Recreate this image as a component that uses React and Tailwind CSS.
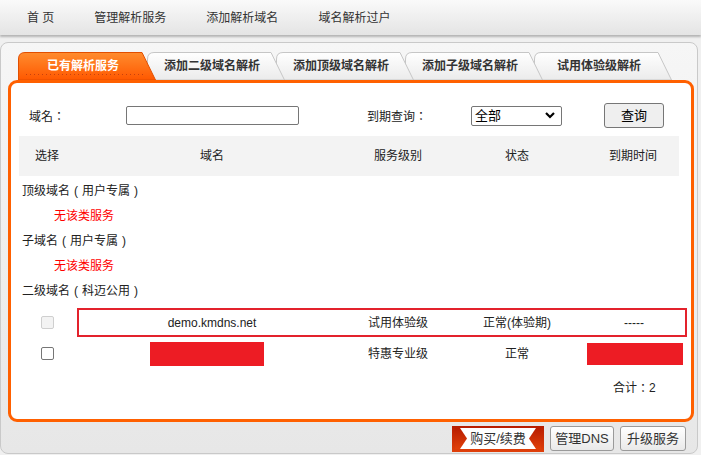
import React from "react";

const FONT = { fontFamily: '"Liberation Sans", "Noto Sans CJK SC", sans-serif' };
// centred full-width punctuation, as in the reference
const PUNCT = { fontFamily: '"Noto Sans CJK TC", "Noto Sans CJK SC", sans-serif' };

const tabs = [
  { label: "已有解析服务", active: true, z: "z-[5]" },
  { label: "添加二级域名解析", z: "z-[4]" },
  { label: "添加顶级域名解析", z: "z-[3]" },
  { label: "添加子级域名解析", z: "z-[2]" },
  { label: "试用体验级解析", z: "z-[1]" },
];

function Tab({ label, active, z, first }) {
  return (
    <div className={`relative h-[28px] w-[138px] shrink-0 ${z} ${first ? "" : "-ml-[9px]"}`}>
      <svg className="absolute inset-0" width="138" height="28" viewBox="0 0 138 28">
        <defs>
          <linearGradient id="tabOn" x1="0" y1="0" x2="0" y2="1">
            <stop offset="0" stopColor="#ff8c2e" />
            <stop offset="1" stopColor="#ff5800" />
          </linearGradient>
          <linearGradient id="tabOff" x1="0" y1="0" x2="0" y2="1">
            <stop offset="0" stopColor="#ffffff" />
            <stop offset="1" stopColor="#ebebeb" />
          </linearGradient>
        </defs>
        <path
          d="M0.5,28 L0.5,7 Q0.5,0.5 7,0.5 L124,0.5 L137.5,28 Z"
          fill={active ? "url(#tabOn)" : "url(#tabOff)"}
          stroke={active ? "#e24f00" : "#c6c6c6"}
        />
        {active && (
          <line x1="8" y1="22.5" x2="126" y2="22.5" stroke="#c8400c" strokeDasharray="1 3" />
        )}
      </svg>
      <div
        className={`relative flex h-full w-[130px] items-center justify-center text-[12px] font-bold ${
          active ? "text-white" : "text-[#333]"
        }`}
      >
        {label}
      </div>
    </div>
  );
}

function Box({ disabled }) {
  return (
    <span
      className={`block h-[13px] w-[13px] rounded-[2px] border ${
        disabled ? "border-[#cfcfcf] bg-[#f3f3f3]" : "border-[#767676] bg-white"
      }`}
    />
  );
}

// group title with centred brackets: 顶级域名（用户专属）
function GroupTitle({ name, note }) {
  return (
    <div className="flex h-[25px] items-center">
      {name}
      <span className="inline-block w-[12px] text-center">(</span>
      {note}
      <span className="inline-block w-[12px] text-center">)</span>
    </div>
  );
}

function BuyButton() {
  return (
    <div className="relative h-[26px] w-[92px]">
      <svg className="absolute inset-0" width="92" height="26" viewBox="0 0 92 26">
        <defs>
          <linearGradient id="buyRed" x1="0" y1="0" x2="0" y2="1">
            <stop offset="0" stopColor="#b81d00" />
            <stop offset="1" stopColor="#e0400a" />
          </linearGradient>
        </defs>
        <rect x="0" y="0" width="92" height="26" fill="url(#buyRed)" />
        <rect x="3" y="2" width="86" height="21" fill="#ffffff" />
        <polygon points="3,2 8,2 15,12.5 8,23 3,23" fill="url(#buyRed)" />
        <polygon points="89,2 84,2 77,12.5 84,23 89,23" fill="url(#buyRed)" />
      </svg>
      <div className="relative flex h-[25px] items-center justify-center text-[13px] text-[#333]">
        购买/续费
      </div>
    </div>
  );
}

function App() {
  return (
    <div className="h-[455px] w-[701px] overflow-hidden bg-[#f0f0f0] text-[12px] text-[#222]" style={FONT}>
      <nav className="flex h-[35px] items-center gap-[40px] bg-gradient-to-b from-[#fafafa] to-[#e4e4e4] pl-[27px] text-[12px] text-[#333] shadow-[0_2px_2px_rgba(0,0,0,0.25)]">
        <span>首 页</span>
        <span>管理解析服务</span>
        <span>添加解析域名</span>
        <span>域名解析过户</span>
      </nav>

      <section className="mt-[7px] mr-[3px] h-[412px] rounded-[8px] border border-[#c9c9c9] bg-gradient-to-b from-[#f6f6f6] to-[#e7e7e7]">
        <div className="flex pt-[9px] pl-[17px]">
          {tabs.map((t, i) => (
            <Tab key={t.label} {...t} first={i === 0} />
          ))}
        </div>

        <div className="ml-[7px] h-[342px] w-[686px] rounded-[9px] border-[3px] border-[#ff6000] bg-white">
          <div className="mt-[20px] flex h-[25px] items-center pl-[18px]">
            <span className="w-[97px]" style={PUNCT}>域名：</span>
            <span className="h-[19px] w-[173px] rounded-[2px] border border-[#767676] bg-white" />
            <span className="ml-[68px] w-[104px]" style={PUNCT}>到期查询：</span>
            <div className="flex h-[20px] w-[91px] items-center justify-between rounded-[2px] border border-[#767676] pr-[6px] pl-[3px] text-[13px] text-black">
              <span>全部</span>
              <svg width="10" height="7" viewBox="0 0 10 7">
                <polyline points="1,1 5,5 9,1" fill="none" stroke="#000" strokeWidth="2.2" />
              </svg>
            </div>
            <button
              type="button"
              className="ml-[42px] h-[25px] w-[60px] rounded-[3px] border border-[#767676] bg-[#efefef] text-[13px] text-black"
            >
              查询
            </button>
          </div>

          <div className="mt-[8px] ml-[8px] grid h-[40px] w-[660px] grid-cols-[56px_274px_98px_140px_92px] items-center bg-[#f3f3f3] text-center">
            <span>选择</span>
            <span>域名</span>
            <span>服务级别</span>
            <span>状态</span>
            <span>到期时间</span>
          </div>

          <div className="mt-[2px] pl-[11px]">
            <GroupTitle name="顶级域名" note="用户专属" />
            <div className="flex h-[25px] items-center pl-[32px] text-[#ff0000]">无该类服务</div>
            <GroupTitle name="子域名" note="用户专属" />
            <div className="flex h-[25px] items-center pl-[32px] text-[#ff0000]">无该类服务</div>
            <GroupTitle name="二级域名" note="科迈公用" />
          </div>

          <div className="mt-[5px] flex items-center">
            <div className="w-[66px] pl-[30px]">
              <Box disabled />
            </div>
            <div className="grid h-[29px] w-[610px] grid-cols-[266px_106px_132px_102px] items-center border-2 border-[#e3222c] text-center">
              <span>demo.kmdns.net</span>
              <span>试用体验级</span>
              <span>正常(体验期)</span>
              <span>-----</span>
            </div>
          </div>

          <div className="mt-[4px] flex h-[25px] items-center">
            <div className="w-[66px] pl-[30px]">
              <Box />
            </div>
            <div className="grid w-[610px] grid-cols-[266px_106px_132px_102px] items-center pl-[2px] text-center">
              <span className="ml-[71px] block h-[24px] w-[114px] bg-[#ed1c24]" />
              <span>特惠专业级</span>
              <span>正常</span>
              <span className="ml-[4px] block h-[22px] w-[96px] bg-[#ed1c24]" />
            </div>
          </div>

          <div className="mt-[12px] flex h-[20px] items-center pl-[602px]">
            合计<span style={PUNCT}>：</span>2
          </div>
        </div>

        <div className="mt-[4px] flex justify-end gap-[6px] pr-[11px]">
          <BuyButton />
          <button
            type="button"
            className="h-[25px] w-[64px] rounded-[3px] border border-[#9a9a9a] bg-gradient-to-b from-white to-[#e9e9e9] text-[13px] text-[#333]"
          >
            管理DNS
          </button>
          <button
            type="button"
            className="h-[25px] w-[66px] rounded-[3px] border border-[#9a9a9a] bg-gradient-to-b from-white to-[#e9e9e9] text-[13px] text-[#333]"
          >
            升级服务
          </button>
        </div>
      </section>
    </div>
  );
}

export default App;
